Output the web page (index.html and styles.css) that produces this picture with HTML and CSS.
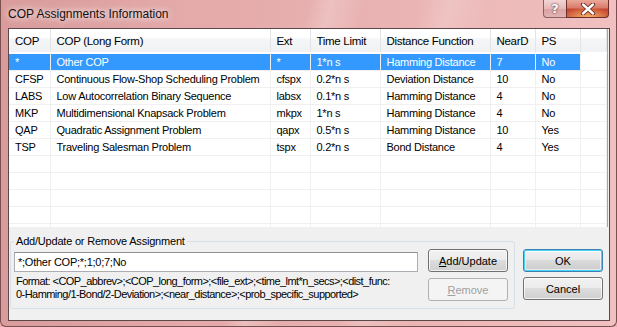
FILE: index.html
```html
<!DOCTYPE html>
<html lang="en">
  <head>
    <meta charset="UTF-8" />
    <title>COP Assignments Information</title>
    <link rel="stylesheet" href="styles.css">
  </head>
  <body>
    <div class="window">
      <div class="titlebar">
        <span class="title">COP Assignments Information</span>
        <div class="caption">
          <span class="cap help">?</span>
          <span class="cap close">
            <svg width="16" height="12" viewBox="0 0 16 12">
              <path d="M3 1.5 L13 10.5 M13 1.5 L3 10.5" stroke="#6b2a22" stroke-width="4.2" stroke-linecap="round" />
              <path d="M3 1.5 L13 10.5 M13 1.5 L3 10.5" stroke="#fff" stroke-width="2.4" stroke-linecap="round" />
            </svg>
          </span>
        </div>
      </div>

      <div class="frame">
        <div class="client">
          <div class="listview">
            <table>
              <colgroup>
                <col style="width:41px" />
                <col style="width:220px" />
                <col style="width:40px" />
                <col style="width:70px" />
                <col style="width:110px" />
                <col style="width:45px" />
                <col style="width:45px" />
                <col />
              </colgroup>
              <thead>
                <tr>
                  <th>COP</th>
                  <th>COP (Long Form)</th>
                  <th>Ext</th>
                  <th>Time Limit</th>
                  <th>Distance Function</th>
                  <th>NearD</th>
                  <th>PS</th>
                  <th></th>
                </tr>
              </thead>
              <tbody>
                <tr class="selected">
                  <td>*</td><td>Other COP</td><td>*</td><td>1*n s</td><td>Hamming Distance</td><td>7</td><td>No</td><td></td>
                </tr>
                <tr>
                  <td>CFSP</td><td>Continuous Flow-Shop Scheduling Problem</td><td>cfspx</td><td>0.2*n s</td><td>Deviation Distance</td><td>10</td><td>No</td><td></td>
                </tr>
                <tr>
                  <td>LABS</td><td>Low Autocorrelation Binary Sequence</td><td>labsx</td><td>0.1*n s</td><td>Hamming Distance</td><td>4</td><td>No</td><td></td>
                </tr>
                <tr>
                  <td>MKP</td><td>Multidimensional Knapsack Problem</td><td>mkpx</td><td>1*n s</td><td>Hamming Distance</td><td>4</td><td>No</td><td></td>
                </tr>
                <tr>
                  <td>QAP</td><td>Quadratic Assignment Problem</td><td>qapx</td><td>0.5*n s</td><td>Hamming Distance</td><td>10</td><td>Yes</td><td></td>
                </tr>
                <tr>
                  <td>TSP</td><td>Traveling Salesman Problem</td><td>tspx</td><td>0.2*n s</td><td>Bond Distance</td><td>4</td><td>Yes</td><td></td>
                </tr>
                <tr class="empty"><td></td><td></td><td></td><td></td><td></td><td></td><td></td><td></td></tr>
                <tr class="empty"><td></td><td></td><td></td><td></td><td></td><td></td><td></td><td></td></tr>
                <tr class="empty"><td></td><td></td><td></td><td></td><td></td><td></td><td></td><td></td></tr>
                <tr class="empty"><td></td><td></td><td></td><td></td><td></td><td></td><td></td><td></td></tr>
                <tr class="empty"><td></td><td></td><td></td><td></td><td></td><td></td><td></td><td></td></tr>
              </tbody>
            </table>
          </div>

          <div class="bottom">
            <fieldset class="group">
              <legend>Add/Update or Remove Assignment</legend>
              <div class="group-grid">
                <div class="textbox">*;Other COP;*;1;0;7;No</div>
                <button class="btn"><u>A</u>dd/Update</button>
                <p class="format">Format: &lt;COP_abbrev&gt;;&lt;COP_long_form&gt;;&lt;file_ext&gt;;&lt;time_lmt*n_secs&gt;;&lt;dist_func:<br />0-Hamming/1-Bond/2-Deviation&gt;;&lt;near_distance&gt;;&lt;prob_specific_supported&gt;</p>
                <button class="btn disabled"><u>R</u>emove</button>
              </div>
            </fieldset>

            <div class="dlg-buttons">
              <button class="btn default">OK</button>
              <button class="btn">Cancel</button>
            </div>
          </div>
        </div>
      </div>
    </div>
  </body>
</html>
```

FILE: styles.css
```css
* {
  margin: 0;
  padding: 0;
  box-sizing: border-box;
}
body {
  width: 617px;
  height: 327px;
  overflow: hidden;
  background: #e8b0b0;
  font-family: "Liberation Sans", Arial, sans-serif;
  font-size: 11px;
  color: #000;
}

/* window frame */
.window {
  width: 617px;
  height: 327px;
  display: flex;
  flex-direction: column;
  border: 1px solid #7a4f4f;
  border-top: none;
  border-radius: 0 0 6px 6px;
  background:
    linear-gradient(105deg, rgba(255,255,255,0) 0%, rgba(255,255,255,0) 44%, rgba(255,255,255,.22) 47%, rgba(255,255,255,0) 52%, rgba(255,255,255,0) 60%, rgba(255,255,255,.18) 64%, rgba(255,255,255,0) 70%),
    linear-gradient(90deg, #d99b9b 0%, #e4a9a9 30%, #e9b2b2 60%, #f1c0c0 100%);
}
.titlebar {
  height: 28px;
  display: flex;
  align-items: flex-start;
  padding-left: 7px;
}
.title {
  line-height: 28px;
  font-size: 12px;
  color: #111;
  text-shadow: 0 0 6px rgba(255,255,255,.9), 0 0 10px rgba(255,255,255,.7);
}
.caption {
  margin-left: auto;
  margin-right: 7px;
  display: flex;
}
.cap {
  height: 18px;
  display: flex;
  align-items: center;
  justify-content: center;
  border: 1px solid #8c6060;
  border-top: none;
}
.help {
  width: 23px;
  border-right: none;
  border-radius: 0 0 0 4px;
  font-family: "DejaVu Sans", sans-serif;
  font-weight: bold;
  font-size: 13px;
  color: #fff;
  text-shadow: 0 0 1px #5a3a3a, 0 0 2px #5a3a3a;
  background: linear-gradient(#f3d4d4 0%, #e6b9b9 50%, #d9a2a2 51%, #e2b2b2 100%);
}
.close {
  width: 43px;
  border-color: #6e2e2a;
  border-radius: 0 0 4px 0;
  background:
    radial-gradient(ellipse 60% 60% at 50% 100%, rgba(255,190,110,.85), rgba(255,190,110,0)),
    linear-gradient(#e9a89a 0%, #d87a68 48%, #c4452f 52%, #c95539 100%);
}

.frame {
  flex: 1;
  display: flex;
  padding: 0 6px 5px 7px;
}
.client {
  width: 602px;
  height: 293px;
  border: 1px solid #5c4848;
  background: #f0f0f0;
  display: flex;
  flex-direction: column;
}

/* list view */
.listview {
  width: 599px;
  height: 198px;
  overflow: hidden;
  background: #fff;
  border-right: 1px solid #a7a7a7;
}
.listview table {
  width: 598px;
  table-layout: fixed;
  border-collapse: collapse;
}
.listview th {
  height: 24px;
  padding: 0 6px;
  text-align: left;
  font-weight: normal;
  font-size: 11.5px;
  letter-spacing: -0.3px;
  white-space: nowrap;
  background: linear-gradient(#ffffff 0%, #ffffff 40%, #f5f6f7 41%, #f0f1f2 100%);
  border-right: 1px solid #e3e4e6;
  border-bottom: 1px solid #e5e5e5;
}
.listview td {
  height: 17px;
  padding: 0 6px;
  letter-spacing: -0.25px;
  white-space: nowrap;
  overflow: hidden;
  border-right: 1px solid #f0f0f0;
  border-bottom: 1px solid #f0f0f0;
}
.listview tbody tr:first-child td {
  border-top: 2px solid #fff;
}
.listview tr.selected td {
  background: #3399ff;
  color: #fff;
}
.listview tr.selected td:last-child {
  background: #fff;
}

/* bottom part */
.bottom {
  display: flex;
  padding-left: 1px;
  margin-top: 7px;
}
.group {
  width: 505px;
  border: 1px solid #d5dfe5;
  border-radius: 3px;
  padding: 1px 6px 7px 3px;
}
.group legend {
  padding: 0 2px;
  line-height: 14px;
  font-size: 11px;
  letter-spacing: -0.2px;
}
.group-grid {
  display: grid;
  grid-template-columns: 404px 80px;
  column-gap: 10px;
  row-gap: 6px;
}
.textbox {
  align-self: end;
  height: 20px;
  padding: 0 3px;
  line-height: 18px;
  letter-spacing: -0.25px;
  background: #fff;
  border: 1px solid #abadb3;
  border-top-color: #8e9196;
  white-space: nowrap;
}
.format {
  margin-top: -3px;
  line-height: 13px;
  letter-spacing: -0.55px;
  white-space: nowrap;
  padding-left: 2px;
}

.btn {
  width: 80px;
  height: 23px;
  font-family: "Liberation Sans", Arial, sans-serif;
  font-size: 11px;
  color: #000;
  border: 1px solid #707070;
  border-radius: 3px;
  background: linear-gradient(#f2f2f2 0%, #ebebeb 49%, #dddddd 50%, #cfcfcf 100%);
  box-shadow: inset 0 0 0 1px rgba(255,255,255,.75);
}
.btn.default {
  border-color: #3c7fb1;
  box-shadow: inset 0 0 0 1px #48d2f8, inset 0 0 0 2px rgba(255,255,255,.6);
  background: linear-gradient(#f0f0f0 0%, #e8e8e8 49%, #dadada 50%, #cccccc 100%);
}
.btn.disabled {
  color: #a0a0a0;
  border-color: #adb2b5;
  background: #f4f4f4;
  box-shadow: none;
}
.dlg-buttons {
  margin-left: 8px;
  margin-top: 15px;
  display: flex;
  flex-direction: column;
  gap: 5px;
}
```
